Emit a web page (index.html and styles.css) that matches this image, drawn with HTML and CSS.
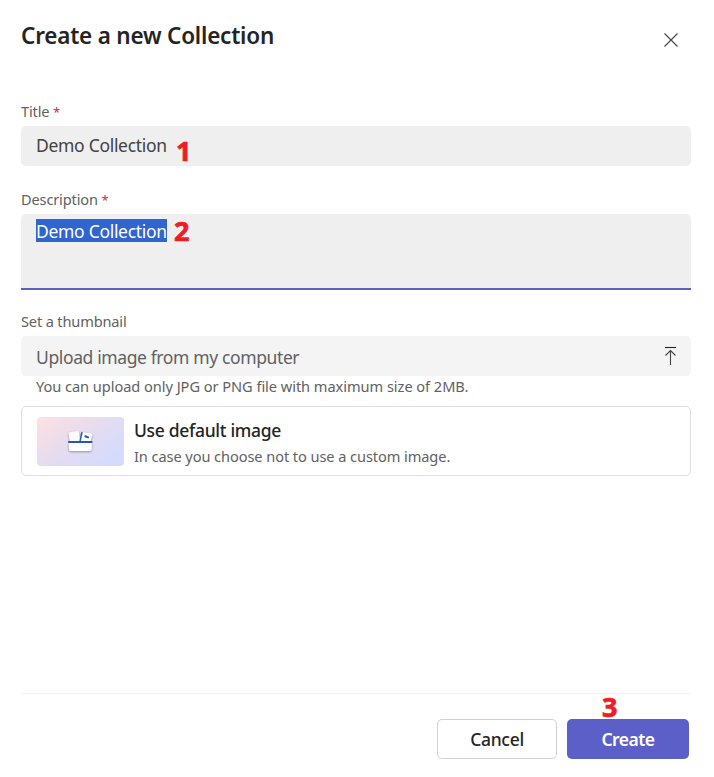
FILE: index.html
```html
<!DOCTYPE html>
<html lang="en">
<head>
<meta charset="utf-8">
<title>Create a new Collection</title>
<link rel="stylesheet" href="styles.css">
</head>
<body>
<main class="dialog">
  <header class="header">
    <h1>Create a new Collection</h1>
    <button class="close" aria-label="Close"><svg width="16" height="16" viewBox="0 0 16 16"><path d="M1.500 1.500l13 13M14.500 1.500l-13 13"/></svg></button>
  </header>
  <form class="form">
    <label class="label"><span>Title</span> <b>*</b></label>
    <div class="field title-field"><span class="value">Demo Collection</span><span class="step step-one">1</span></div>
    <label class="label description-label"><span>Description</span> <b>*</b></label>
    <div class="field area"><span class="value selected">Demo Collection</span><span class="step step-two">2</span></div>
    <label class="label"><span>Set a thumbnail</span></label>
    <div class="field upload"><span class="placeholder">Upload image from my computer</span>
      <svg width="14" height="20" viewBox="0 0 14 20"><path class="bar" d="M3 1.500h11"/><path d="M8.500 19V4.500M3.500 9.500l5-5 5 5"/></svg>
    </div>
    <p class="hint">You can upload only JPG or PNG file with maximum size of 2MB.</p>
    <section class="card">
      <div class="thumb">
        <svg width="28" height="26" viewBox="0 0 28 26">
          <g class="shadow">
            <path fill="#fafafa" d="M1.500 4.500q0-1 1-1.200l7.500-1.300q1.500-.2 1.800 1L13.500 14H3z"/>
            <path fill="#fff" d="M15 3l9 1.500q1.500.4 1.200 1.800L23 14H12z"/>
          </g>
          <path stroke="#2563b8" stroke-width="1.500" d="M15 3l-2.300 11"/>
          <path stroke="#2457b5" stroke-width="2" d="M17.600 7l4.200 1.600"/>
          <path class="shadow" fill="#fff" d="M1.800 14h23v6q0 2-2 2h-19q-2 0-2-2z"/>
          <path stroke="#2457b5" stroke-width="2" d="M1.200 13h24.200"/>
        </svg>
      </div>
      <div class="copy"><h2>Use default image</h2><p>In case you choose not to use a custom image.</p></div>
    </section>
  </form>
  <footer class="footer">
    <button class="btn cancel">Cancel</button>
    <button class="btn create">Create</button>
    <span class="step step-three">3</span>
  </footer>
</main>
</body>
</html>
```
FILE: styles.css
```css
* { box-sizing: border-box; }
body { margin: 0; background: #fff; color: #242424; font-family: "Noto Sans", "Open Sans", sans-serif; }
h1, h2, p { margin: 0; }
.dialog { width: 714px; height: 777px; padding: 0 23px 18px 21px; display: flex; flex-direction: column; }
.header { height: 101px; display: flex; justify-content: space-between; }
h1 { margin-top: 20px; font-size: 22.500px; line-height: 32px; font-weight: 600; letter-spacing: -.21px; }
.close { margin: 32px 4px 0 0; padding: 0; width: 32px; height: 16px; display: flex; justify-content: center; border: 0; background: none; }
svg { display: block; fill: none; stroke: none; overflow: visible; }
.close svg, .upload svg { stroke: #424242; stroke-width: 1.100; }
.upload .bar { stroke: #242424; }
.form { flex: 1; display: flex; flex-direction: column; }
.label { height: 25px; font-size: 14.600px; line-height: 20px; color: #616161; letter-spacing: -.16px; white-space: nowrap; }
.label b { color: #c4314b; font-weight: 400; font-size: 13px; }
.field { width: 670px; height: 40px; padding: 0 15px; display: flex; background: #efefef; border-radius: 5px; font-size: 17.500px; line-height: 24px; letter-spacing: -.3px; flex: none; position: relative; }
.title-field { align-items: center; margin-bottom: 23px; padding-bottom: 2px; color: #424242; }
.area { height: 76px; padding-top: 5px; border-bottom: 2px solid #5b5fc7; border-radius: 5px 5px 0 0; margin-bottom: 21px; }
.selected { height: 23px; background: #3065d0; color: #fff; }
.upload { align-items: center; justify-content: space-between; background: #f4f4f4; color: #616161; letter-spacing: -.38px; }
.placeholder { padding-top: 2px; }
.hint { padding-left: 15px; height: 30px; font-size: 14.600px; line-height: 21px; color: #616161; letter-spacing: -.045px; }
.card { width: 670px; height: 70px; padding: 10px 15px; display: flex; gap: 10px; border: 1px solid #dedede; border-radius: 5px; }
.thumb { width: 87px; height: 49px; border-radius: 4px; display: flex; align-items: center; justify-content: center; background: linear-gradient(145deg, #ffe0df 0%, #e6dcef 45%, #d5dbfe 85%); }
.shadow { filter: drop-shadow(0 1px 1px rgba(40, 30, 60, .4)); }
h2 { font-size: 17.500px; font-weight: 500; line-height: 26px; letter-spacing: -.31px; }
.copy p { font-size: 14.600px; line-height: 26px; color: #616161; letter-spacing: -.08px; }
.footer { height: 66px; border-top: 1px solid #f2f2f2; padding: 25px 2px 0 0; display: flex; justify-content: flex-end; gap: 10px; position: relative; width: 670px; }
.btn { height: 40px; border-radius: 5px; font: 500 17.500px/24px "Noto Sans", sans-serif; padding: 0; letter-spacing: -.3px; }
.cancel { width: 120px; border: 1px solid #d1d1d1; background: #fff; color: #242424; }
.create { width: 122px; border: 0; background: #5b5fc7; color: #fff; font-weight: 600; letter-spacing: -.5px; }
.step { position: absolute; color: #f01c24; font: 700 27px/30px "Noto Sans", sans-serif; letter-spacing: 0; -webkit-text-stroke: .7px #f01c24; }
.step-one { left: 155px; top: 10px; }
.step-two { left: 153px; top: 2px; }
.step-three { left: 581px; top: -2px; }
```
